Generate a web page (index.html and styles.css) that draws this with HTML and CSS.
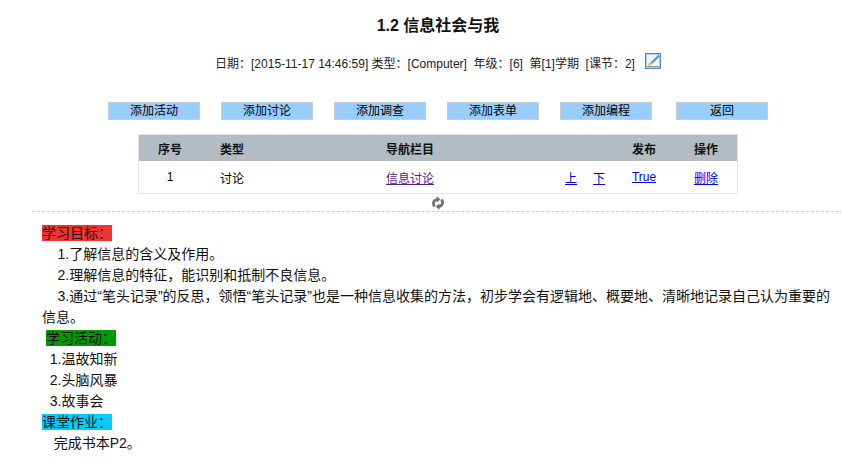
FILE: index.html
```html
<!DOCTYPE html>
<html lang="zh-CN">
<head>
<meta charset="utf-8">
<title>1.2 信息社会与我</title>
<link rel="stylesheet" href="styles.css">
</head>
<body>
<div class="page">
  <h1 class="title">1.2 信息社会与我</h1>
  <div class="meta">
    <span>日期：[2015-11-17 14:46:59] 类型：[Computer]&nbsp; 年级：[6]&nbsp; 第[1]学期&nbsp; [课节：2]</span>
    <svg class="edit-icon" width="16" height="16" viewBox="0 0 16 16">
      <rect x="0.5" y="0.5" width="15" height="15" fill="#dbe8f6" stroke="#5f86b0"/>
      <rect x="1.5" y="1.5" width="13" height="13" fill="#eef4fb" stroke="#b7cde4"/>
      <path d="M13.5 2 L7 8.5 L5.5 11 L8 9.8 L14.5 3.2 Z" fill="#5b8fd0" stroke="#3a6ca8" stroke-width="0.5"/>
      <path d="M3 13 L4 10 L6 9 L7.5 10.5 L6 12 Z" fill="#f0b530"/>
      <path d="M2 13.5 H14" stroke="#7d9cbd"/>
    </svg>
  </div>
  <div class="actions">
    <a class="btn">添加活动</a>
    <a class="btn">添加讨论</a>
    <a class="btn">添加调查</a>
    <a class="btn">添加表单</a>
    <a class="btn">添加编程</a>
    <a class="btn btn-back">返回</a>
  </div>
  <table class="nav-table">
    <colgroup>
      <col class="c1"><col class="c2"><col class="c3"><col class="c4"><col class="c5"><col class="c6">
    </colgroup>
    <thead>
      <tr>
        <th>序号</th>
        <th class="left pad-type">类型</th>
        <th class="left">导航栏目</th>
        <th></th>
        <th>发布</th>
        <th>操作</th>
      </tr>
    </thead>
    <tbody>
      <tr>
        <td>1</td>
        <td class="left pad-type">讨论</td>
        <td class="left"><a class="visited" href="#">信息讨论</a></td>
        <td class="left pad-move"><a href="#">上</a><a class="down" href="#">下</a></td>
        <td><a href="#">True</a></td>
        <td><a href="#">删除</a></td>
      </tr>
    </tbody>
  </table>
  <div class="reload">
    <svg width="14" height="14" viewBox="0 0 14 14" fill="#707070">
      <path d="M2.4 11.4 C-0.2 8 1 2.8 5.6 2.2 L5.6 0.2 L9.6 3.4 L5.6 6.6 L5.6 5 C3.8 5.4 3.4 7.4 4.6 9.2 Z"/>
      <path d="M11.6 2.6 C14.2 6 13 11.2 8.4 11.8 L8.4 13.8 L4.4 10.6 L8.4 7.4 L8.4 9 C10.2 8.6 10.6 6.6 9.4 4.8 Z"/>
    </svg>
  </div>
  <div class="content">
    <div><span class="tag tag-red">学习目标：</span></div>
    <div>&nbsp;&nbsp;&nbsp;&nbsp;1.了解信息的含义及作用。</div>
    <div>&nbsp;&nbsp;&nbsp;&nbsp;2.理解信息的特征，能识别和抵制不良信息。</div>
    <div>&nbsp;&nbsp;&nbsp;&nbsp;3.通过“笔头记录”的反思，领悟“笔头记录”也是一种信息收集的方法，初步学会有逻辑地、概要地、清晰地记录自己认为重要的信息。</div>
    <div>&nbsp;<span class="tag tag-green">学习活动：</span></div>
    <div>&nbsp;&nbsp;1.温故知新</div>
    <div>&nbsp;&nbsp;2.头脑风暴</div>
    <div>&nbsp;&nbsp;3.故事会</div>
    <div><span class="tag tag-cyan">课堂作业：</span></div>
    <div>&nbsp;&nbsp;&nbsp;完成书本P2。</div>
  </div>
</div>
</body>
</html>
```
FILE: styles.css
```css
html, body {
  margin: 0;
  padding: 0;
  background: #fff;
  overflow: hidden;
}
body {
  font-family: "Liberation Sans", "Noto Sans CJK SC", sans-serif;
  color: #000;
}
.page {
  width: 812px;
  margin-left: 32px;
}
.title {
  margin: 0;
  padding-top: 16px;
  font-size: 16px;
  line-height: 20px;
  font-weight: bold;
  text-align: center;
  color: #111;
}
.meta {
  display: flex;
  justify-content: center;
  align-items: flex-start;
  gap: 10px;
  margin-top: 19px;
  height: 18px;
  font-size: 12px;
  line-height: 18px;
  color: #222;
}
.edit-icon {
  margin-top: -2px;
}
.actions {
  display: flex;
  justify-content: center;
  gap: 21px;
  margin-top: 29px;
}
.btn {
  box-sizing: border-box;
  width: 92px;
  height: 18px;
  background: #99ccff;
  border: 1px solid #ccc;
  font-size: 12px;
  line-height: 16px;
  text-align: center;
  color: #000;
}
.btn-back {
  margin-left: 3px;
}
.nav-table {
  box-sizing: border-box;
  width: 600px;
  margin: 14px auto 0;
  border: 1px solid #e4e4e4;
  border-collapse: separate;
  border-spacing: 0;
  table-layout: fixed;
  font-size: 12px;
}
.c1 { width: 62px; }
.c2 { width: 185px; }
.c3 { width: 159px; }
.c4 { width: 68px; }
.c5 { width: 62px; }
.c6 { width: 62px; }
.nav-table th {
  height: 26px;
  padding: 0;
  background: #b3bcc3;
  font-weight: bold;
  text-align: center;
  color: #111;
}
.nav-table td {
  height: 32px;
  padding: 0;
  text-align: center;
}
.nav-table .left {
  text-align: left;
}
.nav-table .pad-type {
  padding-left: 19px;
}
.nav-table .pad-move {
  padding-left: 20px;
}
.nav-table a {
  color: #0000ee;
  text-decoration: underline;
}
.nav-table a.visited {
  color: #551a8b;
}
.nav-table a.down {
  margin-left: 16px;
}
.reload {
  display: flex;
  justify-content: center;
  height: 18px;
  padding-top: 2px;
  box-sizing: border-box;
  border-bottom: 1px dashed #ccc;
}
.content {
  padding: 11px 8px 0 10px;
  font-size: 14px;
  line-height: 21px;
  color: #111;
}
.tag {
  display: inline-block;
  height: 16px;
  line-height: 16px;
  margin-bottom: 2px;
  vertical-align: middle;
}
.tag-red { background: #ee3333; }
.tag-green { background: #009900; }
.tag-cyan { background: #00ccff; }
```
